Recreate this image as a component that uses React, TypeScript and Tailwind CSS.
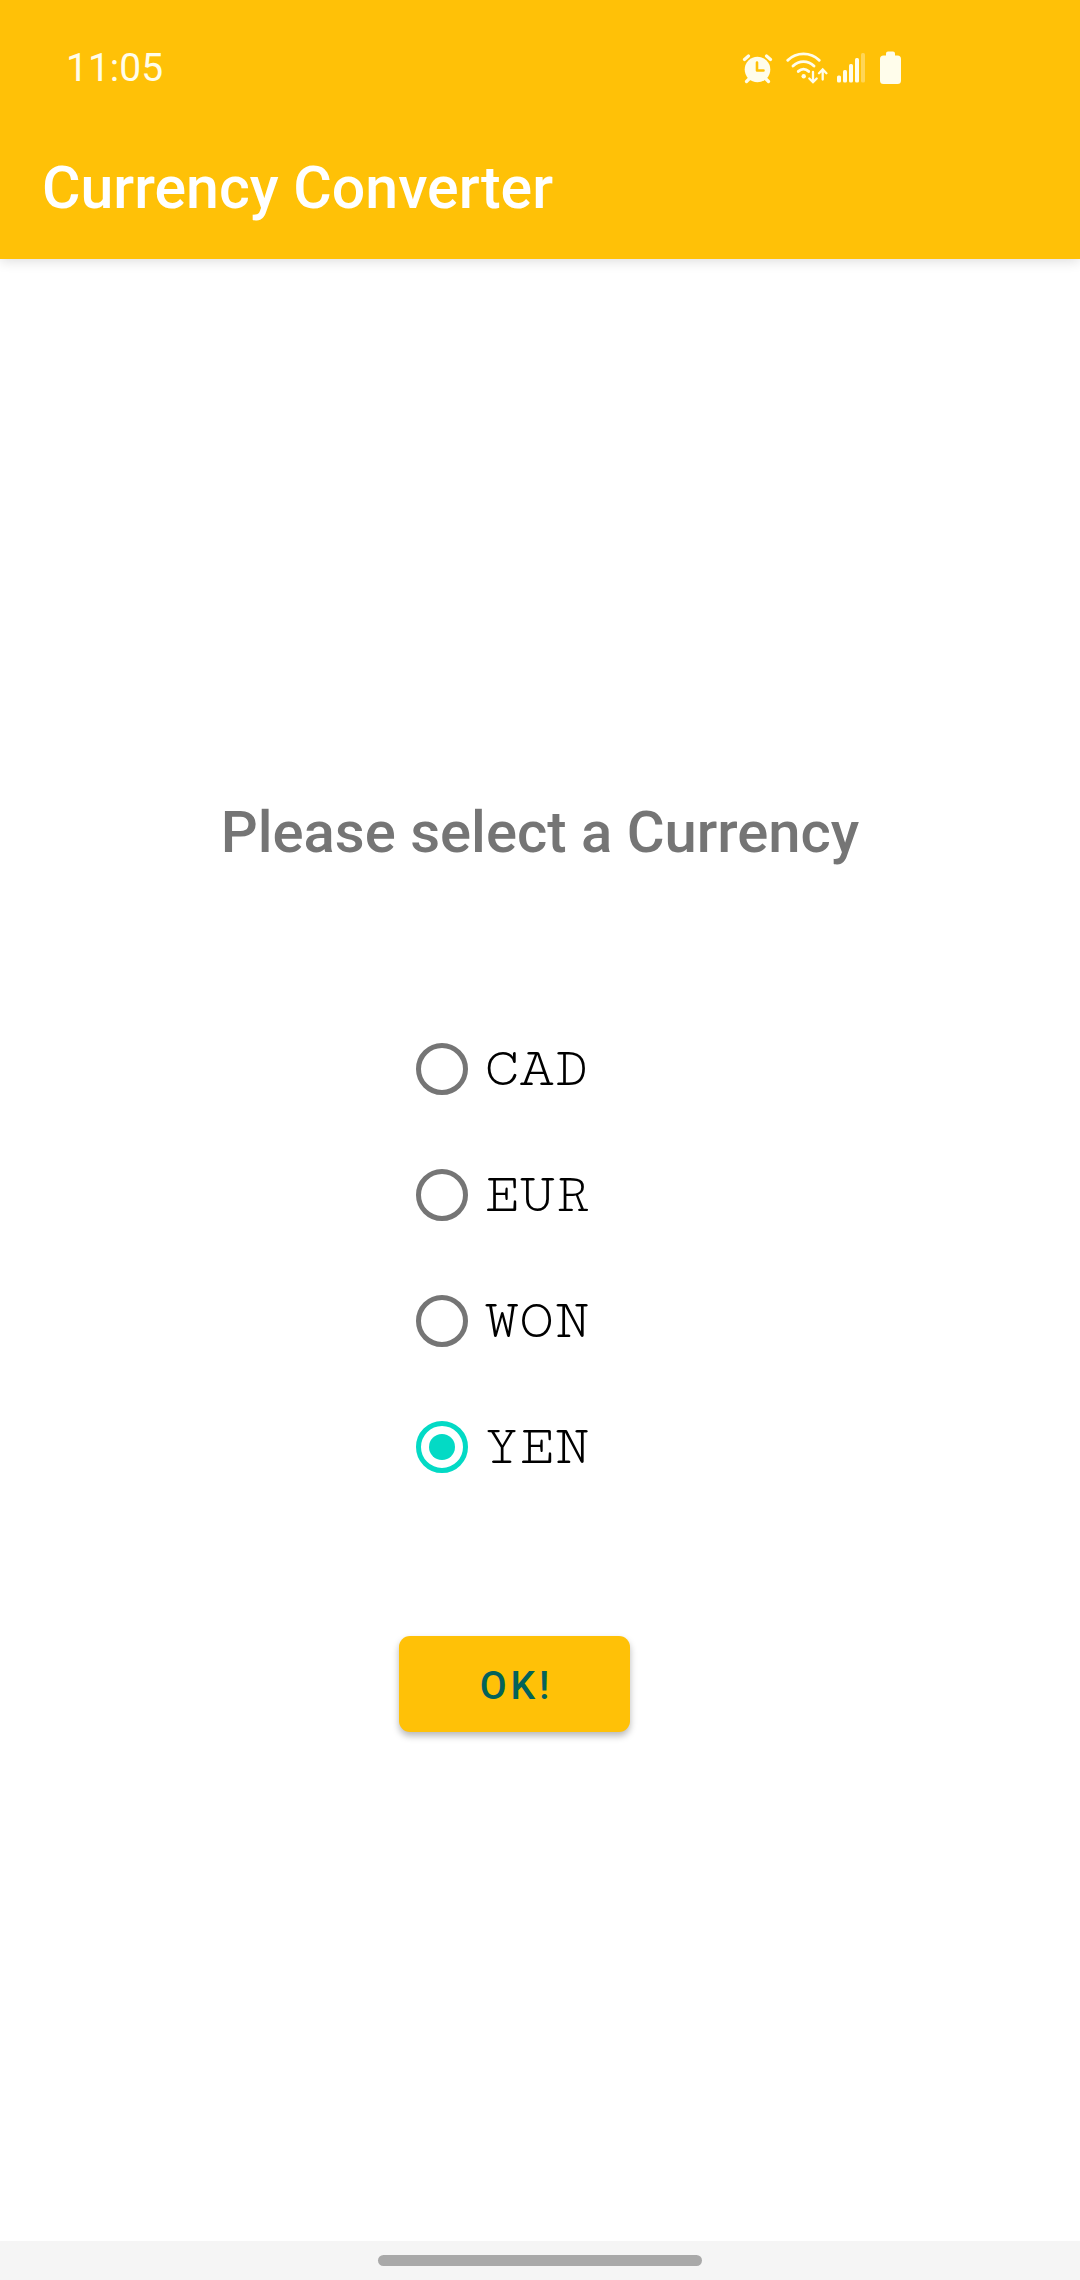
import { useState } from "react";

const currencies = ["CAD", "EUR", "WON", "YEN"];

function AlarmIcon() {
  return (
    <svg width="32" height="34" viewBox="0 0 32 34" fill="none" aria-hidden="true">
      <circle cx="15.5" cy="18.5" r="12.8" fill="#fffdeb" />
      <path d="M2.5 8.5 6.5 5M24.5 5 28.5 8.5" stroke="#fffdeb" strokeWidth="3.2" strokeLinecap="round" />
      <path d="M7.5 27.5 4.5 30.5M23.5 27.5 26.5 30.5" stroke="#fffdeb" strokeWidth="3.2" strokeLinecap="round" />
      <path d="M15 11.5V19.5H21.5" stroke="#ffc107" strokeWidth="2.6" strokeLinecap="round" strokeLinejoin="round" />
    </svg>
  );
}

function WifiIcon() {
  return (
    <svg width="42" height="34" viewBox="0 0 42 34" fill="none" stroke="#fffdeb" strokeLinecap="round" aria-hidden="true">
      <path d="M1.8 9.2C10.5 0.7 24.5 0.7 33.2 9.2" strokeWidth="2.9" />
      <path d="M7 15C13 9.2 22 9.2 28 15" strokeWidth="2.9" />
      <path d="M12.3 20.4C15.5 17.4 19.5 17.4 22.7 20.4" strokeWidth="2.9" />
      <circle cx="17.7" cy="25.3" r="2.2" fill="#fffdeb" stroke="none" />
      <path d="M27 21V31M23.3 27.5 27 31.2 30.7 27.5" strokeWidth="2.3" />
      <path d="M36.7 28.5V19M33 22.2 36.7 18.5 40.4 22.2" strokeWidth="2.3" />
    </svg>
  );
}

function SignalIcon() {
  return (
    <svg width="28" height="34" viewBox="0 0 28 34" fill="#fffdeb" aria-hidden="true">
      <rect x="0" y="24.5" width="4" height="7" rx="1.5" />
      <rect x="6" y="19" width="4" height="12.5" rx="1.5" />
      <rect x="12" y="13" width="4" height="18.5" rx="1.5" />
      <rect x="18" y="7" width="4" height="24.5" rx="1.5" />
      <rect x="24" y="2" width="4" height="29.5" rx="1.5" opacity="0.35" />
    </svg>
  );
}

function BatteryIcon() {
  return (
    <svg width="22" height="34" viewBox="0 0 22 34" fill="#fffdeb" aria-hidden="true">
      <path d="M8 0.5H13Q15 0.5 15 2.5V4.5H17.5Q21 4.5 21 8V29.5Q21 33 17.5 33H3.5Q0 33 0 29.5V8Q0 4.5 3.5 4.5H6V2.5Q6 0.5 8 0.5Z" />
    </svg>
  );
}

export default function App() {
  const [selected, setSelected] = useState("YEN");

  return (
    <div className="flex min-h-screen flex-col bg-white font-['Roboto',sans-serif]">
      <header className="bg-[#ffc107] pt-[45px] pb-[37px] pl-[42px] shadow-[0_2px_12px_rgba(0,0,0,0.14)]">
        <div className="flex items-center justify-between pr-[178px] pl-6">
          <time className="text-[39px] leading-[46px] text-[#fffdeb]">11:05</time>
          <div className="flex items-center">
            <AlarmIcon />
            <div className="ml-3 flex">
              <WifiIcon />
            </div>
            <div className="ml-[9px] flex">
              <SignalIcon />
            </div>
            <div className="ml-[15px] flex">
              <BatteryIcon />
            </div>
          </div>
        </div>
        <h1 className="mt-[63px] text-[59px] leading-[68px] font-medium text-white">Currency Converter</h1>
      </header>

      <main className="flex flex-1 flex-col items-center justify-center pt-[30px]">
        <h2 className="text-[58px] leading-[68px] font-medium text-[#757575]">Please select a Currency</h2>

        <form
          className="mt-[140px] flex w-[282px] flex-col items-start"
          onSubmit={(event) => event.preventDefault()}
        >
          <fieldset className="pl-[17px]" aria-label="Currency">
            {currencies.map((code) => (
              <label
                key={code}
                className="flex h-[126px] items-center gap-4 font-['Cutive_Mono','Liberation_Serif',serif] text-[58px] text-black"
              >
                <input
                  type="radio"
                  name="currency"
                  value={code}
                  checked={selected === code}
                  onChange={() => setSelected(code)}
                  className="grid size-[52px] appearance-none place-items-center rounded-full border-5 border-[#757575] before:size-[26px] before:rounded-full checked:border-[#03dac5] checked:before:bg-[#03dac5]"
                />
                {code}
              </label>
            ))}
          </fieldset>

          <button
            type="submit"
            className="mt-[126px] h-24 w-[231px] rounded-[11px] bg-[#ffc107] pt-1 pl-1 text-[39px] font-medium tracking-widest text-[#03625a] shadow-[0_4px_7px_rgba(0,0,0,0.28)]"
          >
            OK!
          </button>
        </form>
      </main>

      <footer className="flex h-[39px] items-center justify-center bg-[#f5f5f5]">
        <div className="h-[11px] w-[30%] rounded-full bg-[#a9a9a9]" />
      </footer>
    </div>
  );
}
